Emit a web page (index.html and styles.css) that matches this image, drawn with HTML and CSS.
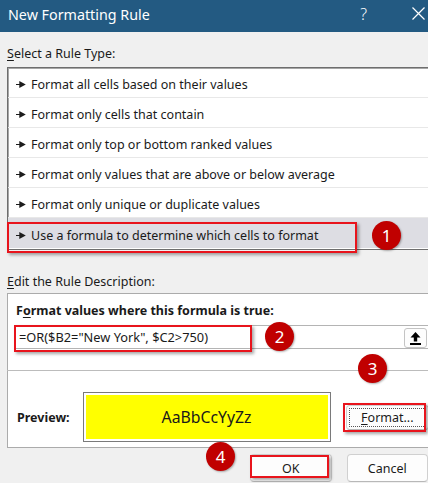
FILE: index.html
```html
<!DOCTYPE html>
<html lang="en">
<head>
    <meta charset="UTF-8">
    <meta name="viewport" content="width=device-width, initial-scale=1.0">
    <title>New Formatting Rule</title>
    <link rel="stylesheet" href="styles.css">
</head>
<body>
    <div class="titlebar">
        <span class="title">New Formatting Rule</span>
        <span class="help">?</span>
        <svg class="close" width="13" height="13" viewBox="0 0 13 13">
            <path d="M0.5 0.5 L12.5 12.5 M12.5 0.5 L0.5 12.5" stroke="#fff" stroke-width="1.2"/>
        </svg>
    </div>

    <div class="content">
        <div class="section-label"><u>S</u>elect a Rule Type:</div>

        <ul class="rule-list">
            <li class="rule"><svg class="bullet" width="10" height="7" viewBox="0 0 10 7"><path d="M0 2.9h4v1.2H0z M3.3 0 L9.8 3.5 L3.3 7z" fill="#1c1c1c"/></svg>Format all cells based on their values</li>
            <li class="rule"><svg class="bullet" width="10" height="7" viewBox="0 0 10 7"><path d="M0 2.9h4v1.2H0z M3.3 0 L9.8 3.5 L3.3 7z" fill="#1c1c1c"/></svg>Format only cells that contain</li>
            <li class="rule"><svg class="bullet" width="10" height="7" viewBox="0 0 10 7"><path d="M0 2.9h4v1.2H0z M3.3 0 L9.8 3.5 L3.3 7z" fill="#1c1c1c"/></svg>Format only top or bottom ranked values</li>
            <li class="rule"><svg class="bullet" width="10" height="7" viewBox="0 0 10 7"><path d="M0 2.9h4v1.2H0z M3.3 0 L9.8 3.5 L3.3 7z" fill="#1c1c1c"/></svg>Format only values that are above or below average</li>
            <li class="rule"><svg class="bullet" width="10" height="7" viewBox="0 0 10 7"><path d="M0 2.9h4v1.2H0z M3.3 0 L9.8 3.5 L3.3 7z" fill="#1c1c1c"/></svg>Format only unique or duplicate values</li>
            <li class="rule selected"><svg class="bullet" width="10" height="7" viewBox="0 0 10 7"><path d="M0 2.9h4v1.2H0z M3.3 0 L9.8 3.5 L3.3 7z" fill="#1c1c1c"/></svg>Use a formula to determine which cells to format
                <span class="mark mark-rule"></span>
                <span class="badge badge-1">1</span>
            </li>
        </ul>

        <div class="section-label edit-label"><u>E</u>dit the Rule Description:</div>

        <div class="panel">
            <div class="panel-label">F<u>o</u>rmat values where this formula is true:</div>

            <div class="formula">
                <span class="formula-text">=OR($B2="New York", $C2&gt;750)</span>
                <button class="collapse-btn">
                    <svg width="11" height="13" viewBox="0 0 11 13"><path d="M5.5 0 L10.5 5.5 H7.2 V9.5 H3.8 V5.5 H0.5 Z" fill="#000"/><rect x="0" y="11" width="11" height="2" fill="#000"/></svg>
                </button>
                <span class="mark mark-formula"></span>
                <span class="badge badge-2">2</span>
            </div>

            <div class="divider">
                <span class="badge badge-3">3</span>
            </div>

            <div class="preview-row">
                <span class="preview-label">Preview:</span>
                <div class="preview-box">
                    <div class="preview-sample">AaBbCcYyZz</div>
                </div>
                <button class="btn format-btn"><u>F</u>ormat...
                    <span class="mark mark-format"></span>
                </button>
            </div>
        </div>

        <div class="footer">
            <span class="badge badge-4">4</span>
            <button class="btn ok-btn">OK
                <span class="mark mark-ok"></span>
            </button>
            <button class="btn">Cancel</button>
        </div>
    </div>
</body>
</html>
```

FILE: styles.css
```css
* {
    margin: 0;
    padding: 0;
    box-sizing: border-box;
}

body {
    width: 428px;
    height: 483px;
    overflow: hidden;
    background: #f0f0f0;
    font-family: 'Noto Sans', 'Open Sans', sans-serif;
    font-size: 12.5px;
    color: #1a1a1a;
}

u {
    text-decoration-thickness: 1px;
    text-underline-offset: 2px;
}

/* title bar */
.titlebar {
    height: 32px;
    background: #235a82;
    color: #fff;
    display: flex;
    align-items: center;
    padding-left: 8px;
}

.title {
    font-size: 14.3px;
    flex: 1;
    margin-top: -3px;
}

.help {
    font-size: 16px;
    font-weight: 300;
    margin-right: 45px;
    margin-top: -4px;
}

.close {
    margin-right: 3px;
    margin-top: -6px;
}

/* content */
.content {
    padding-left: 7px;
}

.section-label {
    line-height: 16px;
    margin-top: 14px;
}

.rule-list {
    list-style: none;
    margin-top: 5px;
    margin-right: -14px;
    background: #fff;
    border: 1px solid #6e6e6e;
    box-shadow: inset 1px 1px 0 #a6a6a6;
    padding-bottom: 1px;
}

.rule {
    position: relative;
    height: 30px;
    padding-top: 4px;
    border-bottom: 1px solid #e8e8e8;
    display: flex;
    align-items: center;
    padding-left: 8px;
}

.rule:last-child {
    border-bottom: none;
}

.rule.selected {
    background: #dddde3;
}

.bullet {
    margin-right: 5px;
    flex-shrink: 0;
}

.edit-label {
    margin-top: 24px;
}

/* description panel */
.panel {
    margin-top: 3px;
    margin-right: -14px;
    background: #fff;
    border: 1px solid #ababab;
    padding: 9px 12px 5px 6px;
}

.panel-label {
    font-weight: bold;
    line-height: 16px;
    margin-left: 2px;
}

.formula {
    position: relative;
    margin-top: 6px;
    height: 24px;
    border: 1px solid #b4b4b4;
    display: flex;
    align-items: center;
    justify-content: space-between;
}

.formula-text {
    font-size: 12.8px;
    padding-left: 4px;
}

.collapse-btn {
    width: 23px;
    height: 20px;
    margin-right: 1px;
    margin-top: 2px;
    border: 1px solid #c4c4c4;
    border-radius: 3px;
    background: #fdfdfd;
    display: flex;
    align-items: center;
    justify-content: center;
}

.divider {
    position: relative;
    height: 1px;
    background: #bcbcbc;
    margin: 21px -12px 0 -7px;
}

.preview-row {
    display: flex;
    align-items: center;
    margin-top: 21px;
}

.preview-label {
    font-weight: bold;
    width: 66px;
    margin-left: 3px;
}

.preview-box {
    width: 250px;
    height: 50px;
    border: 1px solid #7a7a7a;
    padding: 2px;
    background: #fff;
}

.preview-sample {
    height: 100%;
    background: #ffff00;
    display: flex;
    align-items: center;
    justify-content: center;
    font-size: 15.8px;
    color: #1a1a1a;
}

/* buttons */
.btn {
    position: relative;
    font-family: inherit;
    font-size: 12.5px;
    color: #1a1a1a;
    background: #fdfdfd;
    border: 1px solid #d0d0d0;
    border-bottom-color: #b8b8b8;
    border-radius: 4px;
    width: 84px;
    height: 28px;
}

.format-btn {
    margin-left: 15px;
    height: 25px;
    outline: 1px dotted #555;
    outline-offset: -4px;
}

.footer {
    position: relative;
    display: flex;
    gap: 15px;
    margin-top: 6px;
    padding-left: 243px;
}

/* annotations */
.mark {
    position: absolute;
    border: 2px solid #e8141c;
    box-shadow: 2px 2px 3px rgba(0, 0, 0, 0.35);
    pointer-events: none;
}

.mark-rule {
    left: -1px;
    top: 4px;
    width: 350px;
    height: 31px;
}

.mark-formula {
    left: -1px;
    top: -1px;
    width: 238px;
    height: 27px;
}

.mark-format {
    left: -4px;
    top: -3px;
    width: 83px;
    height: 29px;
}

.mark-ok {
    left: -1px;
    top: 0;
    width: 79px;
    height: 23px;
}

.badge {
    position: absolute;
    width: 29px;
    height: 29px;
    border-radius: 50%;
    background: #c00000;
    color: #fff;
    font-size: 17px;
    display: flex;
    align-items: center;
    justify-content: center;
    box-shadow: 1px 1px 2px rgba(0, 0, 0, 0.3);
}

.badge-1 {
    left: 364px;
    top: 3px;
}

.badge-2 {
    left: 250px;
    top: -4px;
}

.badge-3 {
    left: 351px;
    top: -16px;
}

.badge-4 {
    left: 199px;
    top: -12px;
}
```
